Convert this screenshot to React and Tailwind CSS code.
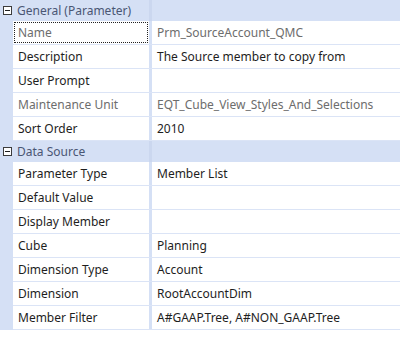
import React from "react";

const sections = [
  {
    title: "General (Parameter)",
    rows: [
      { label: "Name", value: "Prm_SourceAccount_QMC", readOnly: true, focused: true },
      { label: "Description", value: "The Source member to copy from" },
      { label: "User Prompt", value: "" },
      { label: "Maintenance Unit", value: "EQT_Cube_View_Styles_And_Selections", readOnly: true },
      { label: "Sort Order", value: "2010" },
    ],
  },
  {
    title: "Data Source",
    rows: [
      { label: "Parameter Type", value: "Member List" },
      { label: "Default Value", value: "" },
      { label: "Display Member", value: "" },
      { label: "Cube", value: "Planning" },
      { label: "Dimension Type", value: "Account" },
      { label: "Dimension", value: "RootAccountDim" },
      { label: "Member Filter", value: "A#GAAP.Tree, A#NON_GAAP.Tree" },
    ],
  },
];

const Collapse = () => (
  <div className="w-[9px] h-[9px] border border-[#3c3c3c] bg-white flex items-center justify-center">
    <div className="w-[5px] h-[1px] bg-[#1e1e1e]" />
  </div>
);

const Row = ({ row }) => {
  const color = row.readOnly ? "text-[#6d6d6d]" : "text-[#1e1e1e]";
  return (
    <div className="flex h-[24px]">
      <div className="w-[13px] bg-[#d5e0f5]" />
      <div className="flex-1 flex flex-col">
        <div className="flex flex-1">
          <div className="w-[136px] bg-white p-px">
            <div
              className={`h-full flex items-center pl-[3px] ${color} ${
                row.focused ? "border border-dotted border-[#222]" : "border border-transparent"
              }`}
            >
              {row.label}
            </div>
          </div>
          <div className="w-[3px] bg-[#d5e0f5]" />
          <div className={`flex-1 bg-white flex items-center pl-[5px] ${color}`}>{row.value}</div>
        </div>
        <div className="h-px bg-[#dbe4f6]" />
      </div>
    </div>
  );
};

export default function App() {
  return (
    <div
      className="w-[400px] h-[340px] bg-white overflow-hidden text-[12px]"
      style={{ fontFamily: '"Noto Sans", "Open Sans", sans-serif' }}
    >
      {sections.map((s) => (
        <div key={s.title}>
          <div className="flex h-[21px] items-center bg-[#d5e0f5]">
            <div className="w-[13px] flex justify-center pl-[2px]">
              <Collapse />
            </div>
            <div className="w-[136px] pl-[4px] text-[#4a5674]">{s.title}</div>
            <div className="w-[3px] h-full bg-[#cbd7ef]" />
          </div>
          {s.rows.map((r) => (
            <Row key={r.label} row={r} />
          ))}
        </div>
      ))}
    </div>
  );
}
